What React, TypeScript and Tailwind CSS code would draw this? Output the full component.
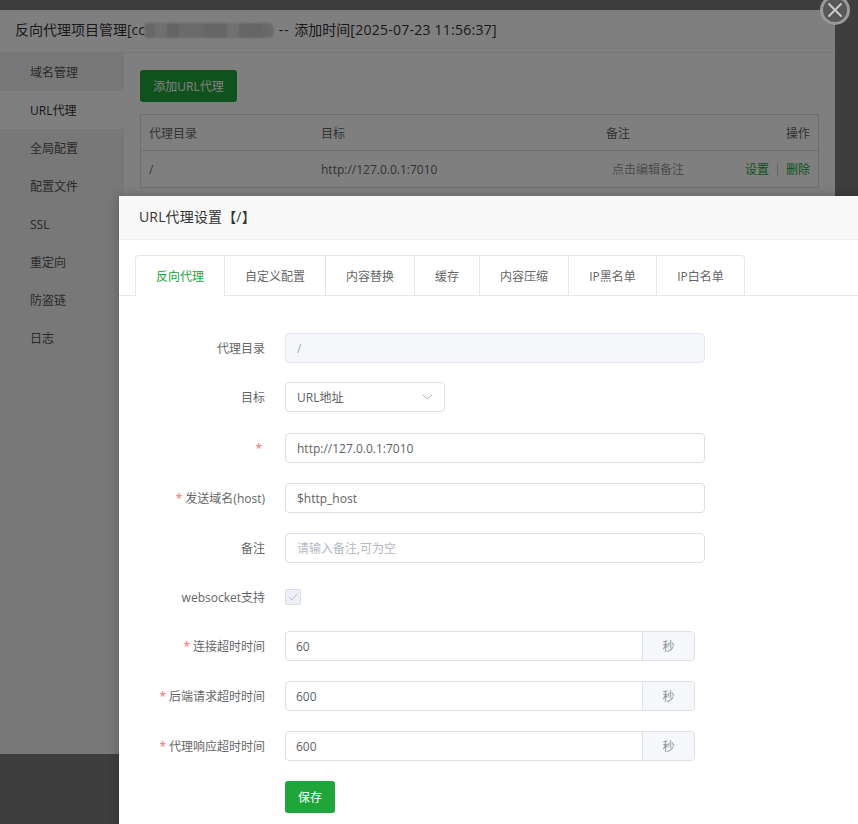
const FONT = "font-['Open_Sans','Noto_Sans_CJK_SC',sans-serif]";

const menu = ["域名管理", "URL代理", "全局配置", "配置文件", "SSL", "重定向", "防盗链", "日志"];
const tabs = [
  { name: "反向代理", w: "w-[90px]" },
  { name: "自定义配置", w: "w-[101px]" },
  { name: "内容替换", w: "w-[89px]" },
  { name: "缓存", w: "w-[65px]" },
  { name: "内容压缩", w: "w-[89px]" },
  { name: "IP黑名单", w: "w-[88px]" },
  { name: "IP白名单", w: "w-[88px]" },
];
// the redacted part of the title
const mosaic = [
  "w-[10px] bg-[#cfcfcf]", "w-[12px] bg-[#dedede]", "w-[12px] bg-[#c8c8c8]", "w-[24px] bg-[#d6d6d6]",
  "w-[24px] bg-[#cdcdcd]", "w-[12px] bg-[#e2e2e2]", "w-[24px] bg-[#cbcbcb]", "w-[11px] bg-[#d2d2d2]",
];

function Label({ text, required }: { text: string; required?: boolean }) {
  return (
    <div className="w-[146px] shrink-0 pt-[2px] text-right text-xs text-[#666]">
      {required && <span className="mr-[3px] text-[#f56c6c]">*</span>}
      {text}
    </div>
  );
}

function Row({ label, required, value, placeholder }: { label: string; required?: boolean; value?: string; placeholder?: string }) {
  return (
    <div className="flex h-[30px] items-center gap-5">
      <Label text={label} required={required} />
      <div className="flex h-[30px] w-[420px] items-center rounded border border-[#dcdfe6] bg-white px-[11px] pt-[2px] text-xs">
        {value ? <span className="text-[#606266]">{value}</span> : <span className="text-[#b4b8c2]">{placeholder}</span>}
      </div>
    </div>
  );
}

function SecondsRow({ label, value }: { label: string; value: string }) {
  return (
    <div className="flex h-[30px] items-center gap-5">
      <Label text={label} required />
      <div className="flex h-[30px] w-[410px] rounded border border-[#dcdfe6] bg-white text-xs">
        <div className="flex flex-1 items-center px-[10px] pt-[2px] text-[#606266]">{value}</div>
        <div className="flex w-[52px] items-center justify-center rounded-r border-l border-[#dcdfe6] bg-[#f5f7fa] pt-[2px] text-[#909399]">秒</div>
      </div>
    </div>
  );
}

export default function App() {
  return (
    <div className={`relative h-screen w-full overflow-hidden bg-[#7c7c7c] ${FONT}`}>
      {/* project dialog behind */}
      <div className="absolute left-0 top-[10px] flex h-[744px] w-[835px] flex-col bg-white">
        <div className="flex h-[43px] shrink-0 items-center border-b border-[#eee] bg-white pb-[2px] pl-[15px] text-sm text-[#333]">
          反向代理项目管理[cc
          <span className="flex h-[15px] w-[129px] overflow-hidden rounded-r-md blur-[1px]">
            {mosaic.map((m) => (
              <span key={m} className={`h-full ${m}`} />
            ))}
          </span>
          <span className="whitespace-pre tracking-[1px]"> -- </span>
          添加时间
          <span className="tracking-[0.25px]">[2025-07-23 11:56:37]</span>
        </div>
        <div className="flex flex-1">
          <div className="w-[124px] shrink-0 bg-[#f0f0f0]">
            {menu.map((item) => (
              <div key={item} className={`flex h-[38px] items-center pl-[30px] pt-[2px] text-xs ${item === "URL代理" ? "bg-white text-[#333]" : "text-[#555]"}`}>
                {item}
              </div>
            ))}
          </div>
          <div className="flex-1 px-4 pt-[17px]">
            <button className="flex h-8 w-[97px] items-center justify-center rounded-[3px] bg-[#20a53a] pt-[2px] text-xs text-white">添加URL代理</button>
            <div className="mt-3 w-[679px] border border-[#ddd] text-xs text-[#666]">
              <div className="flex h-[36px] items-center border-b border-[#ddd] px-2 pt-[2px] font-normal">
                <div className="w-[172px]">代理目录</div>
                <div className="w-[285px]">目标</div>
                <div className="flex-1">备注</div>
                <div>操作</div>
              </div>
              <div className="flex h-[36px] items-center px-2 pt-[2px]">
                <div className="w-[172px]">/</div>
                <div className="w-[291px]">http://127.0.0.1:7010</div>
                <div className="flex-1 text-[#999]">点击编辑备注</div>
                <div className="flex items-center text-[#20a53a]">
                  设置
                  <span className="mx-2 h-[12px] w-px bg-[#ccc]" />
                  删除
                </div>
              </div>
            </div>
          </div>
        </div>
      </div>

      <div className="absolute inset-0 bg-black/50" />

      {/* close */}
      <div className="absolute left-[820px] top-[-5px] flex h-[30px] w-[30px] items-center justify-center rounded-full border-[3px] border-[#9a9a9a] bg-[#585858]">
        <svg width="16" height="16" viewBox="0 0 16 16">
          <path d="M2 2 14 14M14 2 2 14" stroke="#c8c8c8" strokeWidth="2" strokeLinecap="round" />
        </svg>
      </div>

      {/* url proxy settings dialog */}
      <div className="absolute left-[119px] top-[196px] h-[700px] w-[760px] rounded-tl bg-white shadow-[0_0_12px_rgba(0,0,0,0.25)]">
        <div className="flex h-[44px] items-center border-b border-[#eee] bg-[#f8f8f8] pb-[2px] pl-5 text-sm tracking-[0.15px] text-[#333]">URL代理设置【/】</div>
        <div className="flex h-[56px] items-end border-b border-[#e4e7ed] pl-4">
          {tabs.map((t, i) => (
            <div
              key={t.name}
              className={`flex ${t.w} items-center justify-center border-t border-r border-[#e4e7ed] pt-[2px] text-xs ${
                i === 0 ? "-mb-px h-[41px] rounded-tl border-l bg-white text-[#20a53a]" : "h-[40px] text-[#666]"
              } ${i === tabs.length - 1 ? "rounded-tr" : ""}`}
            >
              {t.name}
            </div>
          ))}
        </div>

        <div className="flex flex-col pt-[37px]">
          <div className="flex h-[30px] items-center gap-5">
            <Label text="代理目录" />
            <div className="flex h-[30px] w-[420px] items-center rounded border border-[#e4e7ed] bg-[#f5f7fa] px-[11px] pt-[2px] text-xs text-[#a8abb2]">/</div>
          </div>
          <div className="mt-[19px] flex h-[30px] items-center gap-5">
            <Label text="目标" />
            <div className="flex h-[30px] w-[160px] items-center justify-between rounded border border-[#dcdfe6] bg-white px-[11px] pt-[2px] text-xs text-[#606266]">
              URL地址
              <svg width="11" height="6" viewBox="0 0 11 6" className="-mt-[2px]">
                <path d="M1 1 5.5 5 10 1" fill="none" stroke="#aaa" strokeWidth="1" />
              </svg>
            </div>
          </div>
          <div className="mt-[21px] flex flex-col gap-5">
            <Row label="" required value="http://127.0.0.1:7010" />
            <Row label="发送域名(host)" required value="$http_host" />
            <Row label="备注" placeholder="请输入备注,可为空" />
          </div>
          <div className="mt-[26px] flex h-4 items-center gap-5">
            <Label text="websocket支持" />
            <div className="flex h-4 w-4 items-center justify-center rounded-[2px] border border-[#dcdfe6] bg-[#edf0f7]">
              <svg width="10" height="8" viewBox="0 0 10 8">
                <path d="M1 4 3.8 6.8 9 1" fill="none" stroke="#b4b8c2" strokeWidth="1" />
              </svg>
            </div>
          </div>
          <div className="mt-[26px] flex flex-col gap-5">
            <SecondsRow label="连接超时时间" value="60" />
            <SecondsRow label="后端请求超时时间" value="600" />
            <SecondsRow label="代理响应超时时间" value="600" />
          </div>
          <div className="mt-5 pl-[166px]">
            <button className="h-8 w-[50px] rounded-[3px] bg-[#20a53a] pt-[2px] text-xs text-white">保存</button>
          </div>
        </div>
      </div>
    </div>
  );
}
